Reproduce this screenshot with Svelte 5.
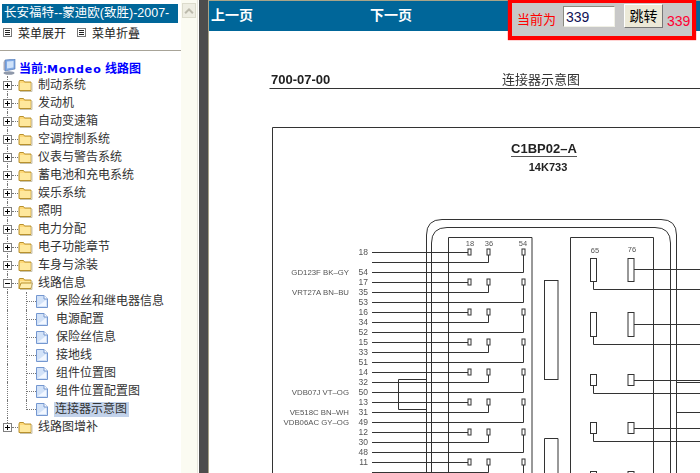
<script>
  const systems = ['制动系统', '发动机', '自动变速箱', '空调控制系统', '仪表与警告系统', '蓄电池和充电系统', '娱乐系统', '照明', '电力分配', '电子功能章节', '车身与涂装'];
  const pages = ['保险丝和继电器信息', '电源配置', '保险丝信息', '接地线', '组件位置图', '组件位置配置图', '连接器示意图'];

  // connector drawing: one group of three wires every 30px
  const groups = [252, 282, 312, 342, 372, 402, 432, 462];
  const pinNumbers = [['18', '', '54'], ['17', '35', '53'], ['16', '34', '52'], ['15', '33', '51'], ['14', '32', '50'], ['13', '31', '49'], ['12', '30', '48'], ['11', '', '']];
  const wireLabels = [
    { y: 273, text: 'GD123F BK–GY' },
    { y: 293, text: 'VRT27A BN–BU' },
    { y: 393, text: 'VDB07J VT–OG' },
    { y: 413, text: 'VE518C BN–WH' },
    { y: 423, text: 'VDB06AC GY–OG' }
  ];
  const terminals = [
    { top: 258, h: 23, a: 269, b: 289 },
    { top: 312, h: 24, a: 324, b: 344 },
    { top: 374, h: 11, a: 380, b: 393 },
    { top: 422, h: 11, a: 428, b: 441 },
    { top: 471, h: 11, a: 480, b: 490 }
  ];
</script>

{#snippet folder(open)}
  <svg class="folder" viewBox="0 0 15 13" width="15" height="13">
    <path d="M1 3 L1.5 1.5 H5.5 L6.5 3 H13 V11.5 H1 Z" fill="#ffd978" stroke="#b8912e" />
    <rect x="2" y="4" width="10.5" height="7" fill="#ffe89c" />
    {#if open}
      <path d="M1 11.5 L3 6 H14.5 L13 11.5 Z" fill="#ffeeb0" stroke="#b8912e" />
    {/if}
    <path d="M2 12.5 H14 V4" fill="none" stroke="#c9c3ad" />
  </svg>
{/snippet}

{#snippet box(open)}
  <svg class="box" viewBox="0 0 9 9" width="9" height="9">
    <rect x="0.5" y="0.5" width="8" height="8" fill="#fff" stroke="#808080" />
    <path d={open ? 'M2 4.5 H7' : 'M2 4.5 H7 M4.5 2 V7'} stroke="#000" />
  </svg>
{/snippet}

{#snippet menuIcon()}
  <svg class="menu-icon" viewBox="0 0 9 9" width="9" height="9">
    <rect x="0.5" y="0.5" width="8" height="8" fill="#fff" stroke="#777" />
    <path d="M2 2.5 H7 M2 4.5 H7 M2 6.5 H7" stroke="#222" />
  </svg>
{/snippet}

{#snippet doc()}
  <svg class="doc" viewBox="0 0 12 13" width="12" height="13">
    <path d="M0.5 0.5 H8 L11.5 4 V12.5 H0.5 Z" fill="#d2e2f8" stroke="#7497d0" />
    <path d="M8 0.5 V4 H11.5" fill="#fff" stroke="#7497d0" />
    <path d="M2 11 L10 5 V11 Z" fill="#f2f7ff" />
  </svg>
{/snippet}

<div class="page">
  <aside class="side">
    <div class="tree-pane">
      <div class="title">长安福特--蒙迪欧(致胜)-2007-</div>
      <div class="menu">
        {@render menuIcon()}<span>菜单展开</span>
        {@render menuIcon()}<span>菜单折叠</span>
      </div>
      <hr />
      <div class="current">
        <svg viewBox="0 0 13 16" width="13" height="16">
          <path d="M2 1 L12 0 V10 L2 12 Z" fill="#7fa8e4" stroke="#4f74ad" stroke-width="0.6" />
          <path d="M4 2.5 L10.5 2 V8.5 L4 9.5 Z" fill="#cfe2fa" />
          <path d="M0.5 3 L2 1 V12 L0.5 11 Z" fill="#a8a8b8" />
          <ellipse cx="6" cy="14" rx="5.5" ry="1.8" fill="#8e98aa" />
        </svg>
        <b>当前:<span class="latin">Mondeo</span> 线路图</b>
      </div>

      <ul class="tree">
        {#each systems as name}
          <li class="row">
            <span class="joint">{@render box(false)}</span>
            {@render folder(false)}
            <span class="label">{name}</span>
          </li>
        {/each}
        <li class="row">
          <span class="joint">{@render box(true)}</span>
          {@render folder(true)}
          <span class="label">线路信息</span>
        </li>
        {#each pages as name, i}
          <li class="row child" class:last={i === pages.length - 1}>
            <span class="joint"></span>
            <span class="elbow"></span>
            {@render doc()}
            <span class="label" class:selected={i === pages.length - 1}>{name}</span>
          </li>
        {/each}
        <li class="row end">
          <span class="joint">{@render box(false)}</span>
          {@render folder(false)}
          <span class="label">线路图增补</span>
        </li>
      </ul>
    </div>
    <div class="scrollbar">
      <div class="arrow">
        <svg viewBox="0 0 14 15" width="14" height="15">
          <path d="M2.5 9.5 L7 5 L11.5 9.5" fill="none" stroke="#bcbaac" stroke-width="2.4" />
        </svg>
      </div>
    </div>
    <div class="gap"></div>
  </aside>
  <div class="splitter"></div>

  <main class="main">
    <div class="topbar">
      <a class="nav first">上一页</a>
      <a class="nav">下一页</a>
      <div class="jump">
        <span class="cur">当前为</span>
        <input value="339" />
        <button>跳转</button>
        <span class="num">339</span>
      </div>
    </div>

    <svg class="sheet" viewBox="209 31 491 442" width="491" height="442">
      <text x="271" y="84" class="head">700-07-00</text>
      <text x="502" y="84" class="head-cn">连接器示意图</text>
      <line x1="269.5" y1="88.5" x2="700" y2="88.5" stroke="#333" stroke-width="1.2" />

      <path d="M700 127.5 H272.5 V473" class="ln" />
      <text x="544" y="153" class="conn" text-anchor="middle">C1BP02–A</text>
      <line x1="511" y1="156.5" x2="577" y2="156.5" stroke="#555" />
      <text x="548" y="171" class="conn-sub" text-anchor="middle">14K733</text>

      <path d="M426.5 473 V235 Q426.5 219.5 442 219.5 H661 Q676.5 219.5 676.5 235 V473" class="ln" />
      <path d="M431.5 473 V243 Q431.5 227.5 447 227.5 H655 Q670.5 227.5 670.5 243 V473" class="ln" />
      <path d="M448.5 473 V237.5 H532 V473" class="ln" />
      <path d="M570.5 473 V237.5 H653.5 V473" class="ln" />

      <text x="470" y="246" class="pin-no" text-anchor="middle">18</text>
      <text x="489" y="246" class="pin-no" text-anchor="middle">36</text>
      <text x="523" y="246" class="pin-no" text-anchor="middle">54</text>
      <text x="595" y="253" class="pin-no" text-anchor="middle">65</text>
      <text x="632" y="252" class="pin-no" text-anchor="middle">76</text>

      {#each groups as y, g}
        <path d="M372 {y + 0.5} H469 M372 {y + 10.5} H488.5 V{y} M372 {y + 20.5} H523.5 V{y}" class="ln" />
        <rect x="468" y={y - 3} width="3" height="6" class="pin" />
        <rect x="487" y={y - 3} width="3" height="6" class="pin" />
        <rect x="522" y={y - 3} width="3" height="6" class="pin" />
        {#each pinNumbers[g] as no, n}
          <text x="368" y={y + 3 + n * 10} class="wire-no" text-anchor="end">{no}</text>
        {/each}
      {/each}

      {#each wireLabels as w}
        <text x="349" y={w.y + 2} class="wire-label" text-anchor="end">{w.text}</text>
      {/each}

      <path d="M426 379.5 H398.5 V409.5 H426" class="ln" />

      <rect x="544.5" y="280.5" width="13.5" height="99" class="ln" />
      <path d="M544.5 473 V438.5 H558 V473" class="ln" />

      {#each terminals as t}
        <rect x="590.5" y={t.top + 0.5} width="6" height={t.h} class="pin" />
        <rect x="628" y={t.top + 0.5} width="6" height={t.h} class="pin" />
        <path d="M634 {t.a + 0.5} H700 M593.5 {t.top + t.h} V{t.b + 0.5} H700" class="ln" />
      {/each}
      <path d="M700 382.5 H676.5 V412.5 H700" class="ln" />
    </svg>
  </main>
</div>

<style>
  :global(body) {
    margin: 0;
    background: #fff;
    overflow: hidden;
  }

  .page {
    display: flex;
    width: 700px;
    height: 473px;
    overflow: hidden;
    font-family: "Liberation Sans", "Noto Sans CJK SC", sans-serif;
  }

  .side {
    display: flex;
    width: 199px;
    flex-shrink: 0;
    background: #fff;
  }

  .tree-pane {
    width: 181px;
    flex-shrink: 0;
    box-sizing: border-box;
    padding-top: 4px;
    color: #333;
    font-size: 12px;
  }

  .title {
    margin: 0 3px 0 2px;
    height: 19px;
    line-height: 19px;
    padding-left: 2px;
    background: #006699;
    color: #fff;
    font-size: 12.5px;
    white-space: nowrap;
    overflow: hidden;
  }

  .menu {
    display: flex;
    align-items: center;
    height: 19px;
    padding: 0 0 0 3px;
    color: #222;
  }

  .menu span {
    margin: 0 11px 0 6px;
  }

  .menu-icon {
    flex-shrink: 0;
  }

  hr {
    margin: 8px 0 0;
    border: none;
    border-top: 1px solid #a8a498;
  }

  .current {
    display: flex;
    align-items: center;
    gap: 3px;
    height: 18px;
    padding: 7px 0 0 3px;
    color: #0000ff;
    font-size: 12px;
  }

  .latin {
    font-family: "DejaVu Sans", sans-serif;
    font-size: 11px;
    letter-spacing: 0.9px;
  }

  .tree {
    list-style: none;
    margin: 0;
    padding: 0;
  }

  .row {
    display: flex;
    align-items: center;
    height: 18px;
    white-space: nowrap;
  }

  .joint {
    position: relative;
    display: flex;
    align-items: center;
    width: 18px;
    height: 18px;
    flex-shrink: 0;
    padding-left: 3px;
    box-sizing: border-box;
  }

  .joint::before {
    content: "";
    position: absolute;
    left: 7px;
    top: 0;
    bottom: 0;
    border-left: 1px dotted #777;
  }

  .end .joint::before {
    bottom: 9px;
  }

  .joint::after {
    content: "";
    position: absolute;
    left: 12px;
    right: 0;
    top: 9px;
    border-top: 1px dotted #777;
  }

  .child .joint::after {
    display: none;
  }

  .box {
    position: relative;
    z-index: 1;
  }

  .folder {
    flex-shrink: 0;
  }

  .label {
    margin-left: 4px;
    padding: 0 1px;
    line-height: 15px;
  }

  .child .label {
    margin-left: 7px;
  }

  .selected {
    background: #c2d2ea;
    margin-left: 6px !important;
    padding: 0 2px 0 1px;
  }

  .elbow {
    position: relative;
    width: 18px;
    height: 18px;
    flex-shrink: 0;
    box-sizing: border-box;
    margin-left: 8px;
    margin-right: -8px;
    border-left: 1px dotted #777;
  }

  .last .elbow {
    height: 10px;
    align-self: flex-start;
  }

  .elbow::after {
    content: "";
    position: absolute;
    left: 0;
    right: 8px;
    top: 9px;
    border-top: 1px dotted #777;
  }

  .doc {
    flex-shrink: 0;
  }

  .scrollbar {
    width: 16px;
    flex-shrink: 0;
    background: #fbfbf2;
    padding-top: 3px;
    box-sizing: border-box;
  }

  .arrow {
    width: 14px;
    height: 15px;
    margin-left: 1px;
    background: #eeede2;
    border: 1px solid #dcdbcc;
    box-sizing: border-box;
    display: flex;
  }

  .gap {
    flex: 1;
    background: #fff;
    border-left: 1px solid #e6e5dc;
  }

  .splitter {
    width: 9px;
    flex-shrink: 0;
    background: #4d4d4d;
    border-right: 1px solid #a8a488;
  }

  .main {
    flex: 1;
    min-width: 0;
    display: flex;
    flex-direction: column;
    background: #fff;
    border-top: 1px solid #a8a488;
  }

  .topbar {
    position: relative;
    display: flex;
    align-items: center;
    height: 30px;
    flex-shrink: 0;
    background: #006699;
  }

  .nav {
    width: 159px;
    padding-left: 2px;
    color: #fff;
    font-size: 14px;
    font-weight: bold;
    margin-top: -4px;
  }

  .nav.first {
    width: 157px;
  }

  .jump {
    position: absolute;
    left: 299px;
    top: -1px;
    width: 180px;
    height: 33px;
    border: 4px solid #f00;
    border-top-width: 3px;
    background: #c8c8c8;
    display: flex;
    align-items: flex-start;
    box-shadow: 0 0 1px #f00;
  }

  .cur {
    margin: 9px 0 0 5px;
    width: 46px;
    color: #f00;
    font-size: 13px;
    line-height: 15px;
  }

  input {
    width: 52px;
    height: 21px;
    margin-top: 3px;
    padding: 0 2px;
    box-sizing: border-box;
    border: 1px solid;
    border-color: #8a8a80 #f0f0e6 #f0f0e6 #8a8a80;
    background: #fff;
    color: #111155;
    font: 14px "Liberation Sans", sans-serif;
  }

  button {
    width: 39px;
    height: 24px;
    margin: 1px 0 0 9px;
    padding: 0 0 3px;
    box-sizing: border-box;
    background: #ece9d8;
    border: 1px solid;
    border-color: #fff #777 #777 #fff;
    color: #000;
    font: 14px "Noto Sans CJK SC", sans-serif;
  }

  .num {
    margin: 10px 0 0 4px;
    color: #ff0033;
    font-size: 14px;
    line-height: 16px;
  }

  .sheet {
    display: block;
    flex-shrink: 0;
    filter: blur(0.4px);
  }

  .ln {
    fill: none;
    stroke: #333;
    stroke-width: 1;
  }

  .pin {
    fill: #fff;
    stroke: #333;
    stroke-width: 1;
  }

  .head {
    font: bold 13px "Liberation Sans", sans-serif;
    fill: #222;
  }

  .head-cn {
    font: 13px "Noto Sans CJK SC", sans-serif;
    fill: #333;
  }

  .conn {
    font: bold 13px "Liberation Sans", sans-serif;
    fill: #222;
  }

  .conn-sub {
    font: bold 11px "Liberation Sans", sans-serif;
    fill: #222;
  }

  .pin-no,
  .wire-no {
    font: 7.5px "Liberation Sans", sans-serif;
    fill: #555;
  }

  .wire-no {
    font-size: 8.5px;
  }

  .wire-label {
    font: 7.8px "Liberation Sans", sans-serif;
    fill: #555;
  }
</style>
